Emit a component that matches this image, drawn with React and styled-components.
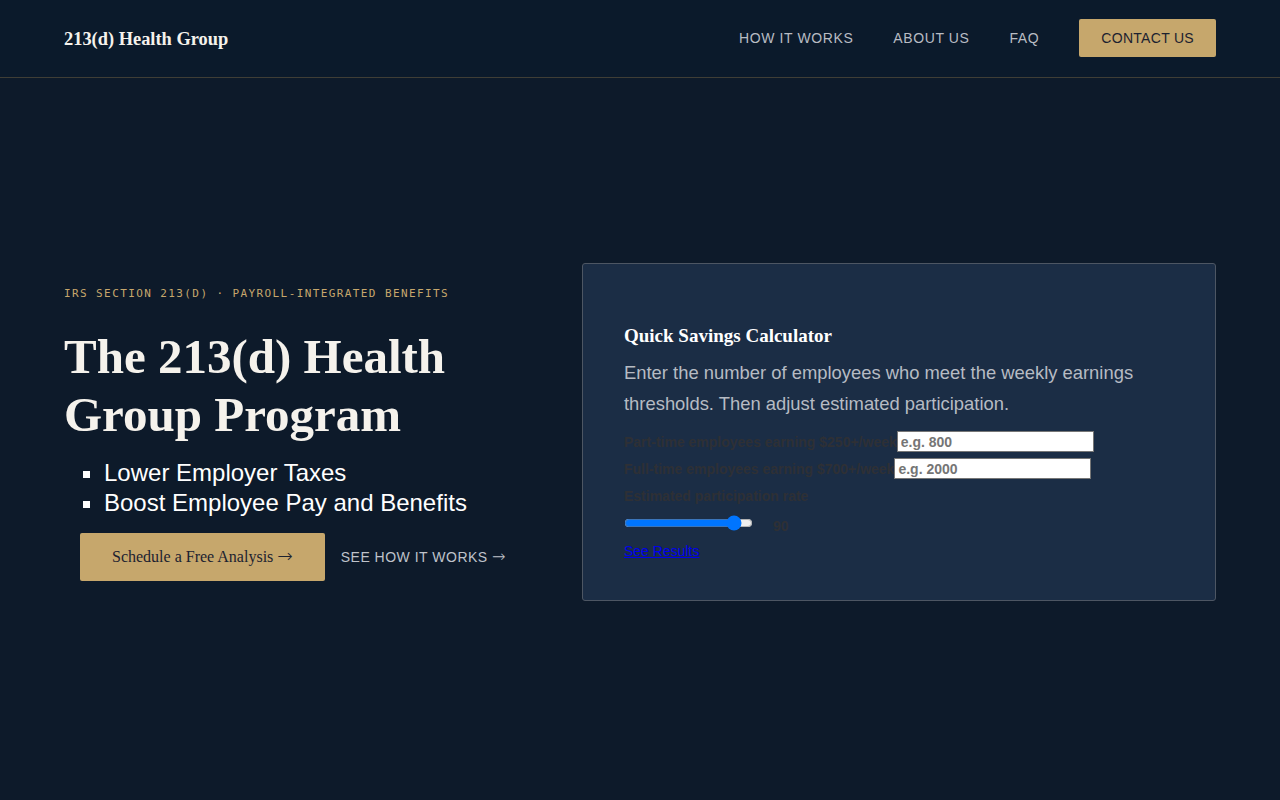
// Imports
import React, { useState } from "react";
import styled, { createGlobalStyle } from "styled-components";

// Global
const GlobalStyle = createGlobalStyle`
	html, body{
		margin: 0;
		padding: 0;
		background-color: #0d1a2a;
	}
	body{
		font-family: "Liberation Sans", Arial, sans-serif;
		color: #f5f2ec;
	}
	*{ box-sizing: border-box; }
`;

// Component
const App = () => {

	// State
	const [rate, setRate] = useState(90);

	// Return
	return(
		<>
			<GlobalStyle/>

			{/* Header */}
			<Header>
				<Logo>213(d) Health Group</Logo>
				<Nav>
					<NavLink href="#how">HOW IT WORKS</NavLink>
					<NavLink href="#about">ABOUT US</NavLink>
					<NavLink href="#faq">FAQ</NavLink>
					<ContactBtn href="#contact">CONTACT US</ContactBtn>
				</Nav>
			</Header>
			{/* Header */}

			{/* Hero */}
			<Hero>
				<Intro>
					<Eyebrow>IRS SECTION 213(D) · PAYROLL-INTEGRATED BENEFITS</Eyebrow>
					<Title>The 213(d) Health Group Program</Title>
					<Bullets>
						<li>Lower Employer Taxes</li>
						<li>Boost Employee Pay and Benefits</li>
					</Bullets>
					<Actions>
						<PrimaryBtn href="#analysis">Schedule a Free Analysis <Arrow>→</Arrow></PrimaryBtn>
						<GhostLink href="#how">SEE HOW IT WORKS <Arrow>→</Arrow></GhostLink>
					</Actions>
				</Intro>

				<Card>
					<CardTitle>Quick Savings Calculator</CardTitle>
					<CardText>Enter the number of employees who meet the weekly earnings thresholds. Then adjust estimated participation.</CardText>
					<Field>
						<Label htmlFor="pt">Part-time employees earning $250+/week</Label>
						<Input id="pt" type="text" placeholder="e.g. 800"/>
					</Field>
					<Field>
						<Label htmlFor="ft">Full-time employees earning $700+/week</Label>
						<Input id="ft" type="text" placeholder="e.g. 2000"/>
					</Field>
					<Field>
						<Label htmlFor="rate">Estimated participation rate</Label>
					</Field>
					<SliderRow>
						<Range id="rate" type="range" min="0" max="100" value={ rate } onChange={ (e) => setRate(e.target.value) }/>
						<RateValue>{ rate }</RateValue>
					</SliderRow>
					<ResultsLink href="#results">See Results</ResultsLink>
				</Card>
			</Hero>
			{/* Hero */}
		</>
	);

};

// Styled
const Header = styled.header`
	display: flex;
	align-items: center;
	justify-content: space-between;
	height: 78px;
	padding: 0 64px;
	background-color: #0b1a2b;
	border-bottom: 1px solid #3f3e36;
`;

const Logo = styled.div`
	font-family: "Liberation Serif", "Times New Roman", serif;
	font-weight: 700;
	font-size: 18.4px;
	color: #f5f2ec;
	margin-top: 2px;
`;

const Nav = styled.nav`
	display: flex;
	align-items: center;
	gap: 40px;
	margin-bottom: 2px;
`;

const NavLink = styled.a`
	font-size: 14px;
	letter-spacing: 0.6px;
	color: #b8bcc3;
	text-decoration: none;
`;

const ContactBtn = styled.a`
	display: inline-block;
	padding: 11px 22px;
	font-size: 14px;
	line-height: 16px;
	letter-spacing: 0.3px;
	color: #1c2230;
	background-color: #c6a76c;
	border-radius: 2px;
	text-decoration: none;
`;

const Hero = styled.main`
	display: grid;
	grid-template-columns: 454px 634px;
	gap: 64px;
	align-items: center;
	min-height: 708px;
	padding: 0 64px;
`;

const Intro = styled.div`
	padding-top: 4px;
`;

const Eyebrow = styled.div`
	font-family: "DejaVu Sans Mono", "Liberation Mono", monospace;
	font-size: 11px;
	letter-spacing: 1.4px;
	color: #c6a76c;
`;

const Title = styled.h1`
	margin: 28px 0 14px 0;
	font-family: "Liberation Serif", "Times New Roman", serif;
	font-weight: 700;
	font-size: 49px;
	line-height: 58px;
	color: #f5f2ec;
`;

const Bullets = styled.ul`
	margin: 0;
	padding-left: 40px;
	list-style: square;
	font-size: 24px;
	line-height: 30px;
	color: #ffffff;
`;

const Actions = styled.div`
	display: flex;
	align-items: center;
	gap: 16px;
	margin-top: 15px;
	padding-left: 16px;
`;

const Arrow = styled.span`
	font-family: "DejaVu Sans", sans-serif;
	font-weight: 200;
	font-size: 1.15em;
	line-height: 1;
`;

const PrimaryBtn = styled.a`
	display: inline-block;
	padding: 14px 32px;
	font-family: "Liberation Serif", "Times New Roman", serif;
	font-size: 16px;
	line-height: 20px;
	color: #1c2230;
	background-color: #c6a76c;
	border-radius: 2px;
	text-decoration: none;
`;

const GhostLink = styled.a`
	font-size: 14px;
	letter-spacing: 0.5px;
	color: #bfc3ca;
	text-decoration: none;
`;

const Card = styled.section`
	padding: 40px 41px 40px 41px;
	background-color: #1b2d45;
	border: 1px solid #4d5663;
	border-radius: 3px;
`;

const CardTitle = styled.h3`
	margin: 21px 0 10px 0;
	font-family: "Liberation Serif", "Times New Roman", serif;
	font-weight: 700;
	font-size: 19px;
	color: #ffffff;
`;

const CardText = styled.p`
	margin: 0 0 12px 0;
	font-size: 18.4px;
	line-height: 31px;
	color: #b6bbc3;
`;

const Field = styled.div`
	display: flex;
	align-items: center;
	min-height: 21px;
	margin-bottom: 6px;
`;

const Label = styled.label`
	font-size: 14px;
	font-weight: 700;
	color: #2e3035;
`;

const Input = styled.input`
	width: 197px;
	height: 21px;
	padding: 1px 3px;
	font-family: "Liberation Sans", Arial, sans-serif;
	font-size: 14px;
	font-weight: 700;
	border: 1px solid #767676;
	background-color: #ffffff;
	&::placeholder{
		color: #757575;
	}
`;

const SliderRow = styled.div`
	display: flex;
	align-items: center;
	gap: 20px;
	margin-bottom: 8px;
`;

const Range = styled.input`
	width: 129px;
	margin: 2px 0;
	accent-color: #0075ff;
`;

const RateValue = styled.span`
	margin-top: 6px;
	font-size: 14px;
	font-weight: 700;
	color: #2e3035;
`;

const ResultsLink = styled.a`
	font-size: 14px;
	color: #0000ee;
	text-decoration: underline;
`;

// Export
export default App;
